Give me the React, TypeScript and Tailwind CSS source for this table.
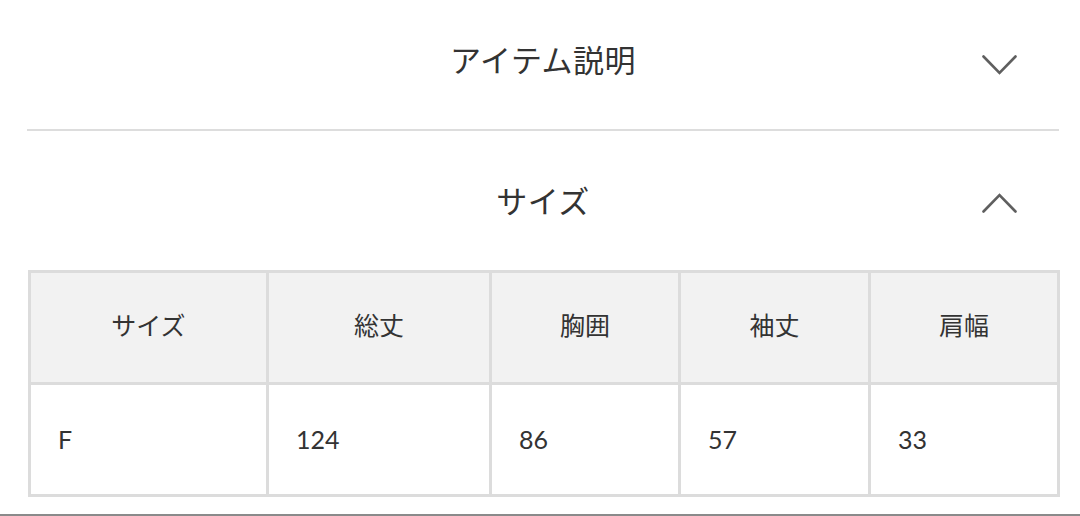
const headers = ["サイズ", "総丈", "胸囲", "袖丈", "肩幅"];
const values = ["F", "124", "86", "57", "33"];
const widths = ["w-[238px]", "w-[223px]", "w-[189px]", "w-[190px]", "w-[189px]"];

function Chevron({ up }: { up?: boolean }) {
  return (
    <svg width="35" height="20" viewBox="0 0 35 20" fill="none" className="text-[#5f5f5f]">
      <path
        d={up ? "M1.5 18.5 L17.5 2 L33.5 18.5" : "M1.5 1.5 L17.5 18 L33.5 1.5"}
        stroke="currentColor"
        strokeWidth="2.6"
        strokeLinecap="round"
        strokeLinejoin="miter"
      />
    </svg>
  );
}

export default function App() {
  return (
    <main
      className="w-[1080px] h-[516px] bg-white text-[#333] overflow-hidden flex flex-col"
      style={{ fontFamily: '"Lato", "Noto Sans CJK JP", sans-serif' }}
    >
      {/* アイテム説明 */}
      <div className="relative h-[131px] ml-[27px] mr-[21px] flex items-center justify-center border-b-2 border-[#dddddd]">
        <span className="text-[31px] leading-none -mt-[8px] tracking-[0.5px]">アイテム説明</span>
        <div className="absolute right-[42px] top-[55px]">
          <Chevron />
        </div>
      </div>

      {/* サイズ */}
      <div className="relative h-[139px] ml-[27px] mr-[21px] flex justify-center pt-[55px]">
        <span className="text-[31px] leading-none tracking-[0.5px]">サイズ</span>
        <div className="absolute right-[42px] top-[62px]">
          <Chevron up />
        </div>
      </div>

      <div className="ml-[28px]">
        <table className="border-collapse text-[25px]">
          <tbody>
            <tr className="bg-[#f2f2f2]">
              {headers.map((h, i) => (
                <td
                  key={h}
                  className={`${widths[i]} h-[112px] border-[3px] border-[#dcdcdc] text-center align-middle leading-none pb-[4px]`}
                >
                  {h}
                </td>
              ))}
            </tr>
            <tr>
              {values.map((v, i) => (
                <td
                  key={i}
                  className={`${widths[i]} h-[112px] border-[3px] border-[#dcdcdc] text-left align-middle leading-none pl-[27px]`}
                >
                  {v}
                </td>
              ))}
            </tr>
          </tbody>
        </table>
      </div>

      <div className="mt-auto h-[2px] bg-[#8a8a8a]" />
    </main>
  );
}
